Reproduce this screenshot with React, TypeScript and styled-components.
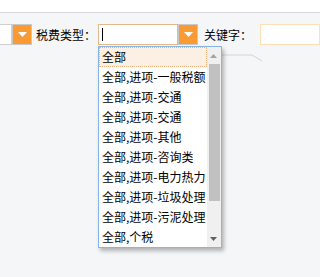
import React from "react";
import styled, { createGlobalStyle } from "styled-components";

const Global = createGlobalStyle`
  html, body { margin: 0; padding: 0; }
  body {
    background: #f5f6f8;
    font-family: "Noto Sans CJK SC", "Noto Sans", sans-serif;
    font-size: 12px;
    color: #000;
    overflow: hidden;
  }
`;

const Page = styled.div`
  position: relative;
  width: 100%;
  height: 277px;
  overflow: hidden;
`;

const Header = styled.div`
  height: 12px;
  background: #ffffff;
  border-bottom: 1px solid #d6d8dc;
`;

const Toolbar = styled.div`
  display: flex;
  align-items: center;
  padding-top: 11px;
  height: 21px;
  white-space: nowrap;
`;

const SelectWrap = styled.div<{ $offset?: number }>`
  position: relative;
  display: flex;
  height: 21px;
  margin-left: ${(p) => p.$offset ?? 0}px;
`;

const TextBox = styled.div<{ $w: number; $border: string }>`
  position: relative;
  box-sizing: border-box;
  width: ${(p) => p.$w}px;
  flex-shrink: 0;
  height: 21px;
  background: #fff;
  border: 1px solid ${(p) => p.$border};
`;

const Caret = styled.span`
  position: absolute;
  left: 3px;
  top: 3px;
  width: 1px;
  height: 13px;
  background: #000;
`;

const DropButton = styled.div`
  box-sizing: border-box;
  width: 20px;
  height: 21px;
  background: #f99a33;
  border: 1px solid #c8c8c8;
  display: flex;
  align-items: center;
  justify-content: center;
`;

const Label = styled.span<{ $ml: number; $mr: number }>`
  margin-left: ${(p) => p.$ml}px;
  margin-right: ${(p) => p.$mr}px;
  font-size: 12px;
  line-height: 21px;
`;

const List = styled.div`
  position: absolute;
  left: 0;
  top: 22px;
  box-sizing: border-box;
  width: 124px;
  height: 202px;
  background: #fff;
  border: 1px solid #86b5e8;
  box-shadow: 2px 3px 4px rgba(0, 0, 0, 0.28);
  display: flex;
  z-index: 2;
`;

const Items = styled.div`
  flex: 1;
  display: flex;
  flex-direction: column;
`;

const Item = styled.div<{ $active?: boolean }>`
  box-sizing: border-box;
  height: 20px;
  line-height: 18px;
  padding-left: 2px;
  font-size: 12px;
  white-space: nowrap;
  overflow: hidden;
  background: ${(p) => (p.$active ? "#fcf0e4" : "#fff")};
  border: 1px ${(p) => (p.$active ? "dotted #f0b27a" : "solid transparent")};
`;

const ScrollBar = styled.div`
  width: 16px;
  background: #f0f0f0;
  display: flex;
  flex-direction: column;
`;

const ArrowCell = styled.div`
  height: 17px;
  display: flex;
  align-items: center;
  justify-content: center;
`;

const Thumb = styled.div`
  height: 137px;
  margin: 0 1px 0 2px;
  background: #c1c1c1;
`;

const TrackRest = styled.div`
  flex: 1;
`;

const BehindShape = styled.svg`
  position: absolute;
  left: 214px;
  top: 52px;
  z-index: 1;
`;

const Tri = ({ dir, color, w, h }: { dir: "up" | "down"; color: string; w: number; h: number }) => (
  <svg width={w} height={h} viewBox={`0 0 ${w} ${h}`}>
    {dir === "down" ? (
      <polygon points={`0,0 ${w},0 ${w / 2},${h}`} fill={color} />
    ) : (
      <polygon points={`0,${h} ${w},${h} ${w / 2},0`} fill={color} />
    )}
  </svg>
);

const options = [
  "全部",
  "全部,进项-一般税额",
  "全部,进项-交通",
  "全部,进项-交通",
  "全部,进项-其他",
  "全部,进项-咨询类",
  "全部,进项-电力热力",
  "全部,进项-垃圾处理",
  "全部,进项-污泥处理",
  "全部,个税",
];

export default function App() {
  return (
    <Page>
      <Global />
      <Header />
      <Toolbar>
        <SelectWrap $offset={-40}>
          <TextBox $w={52} $border="#d0d0d0" />
          <DropButton>
            <Tri dir="down" color="#fff" w={9} h={5} />
          </DropButton>
        </SelectWrap>
        <Label $ml={4} $mr={2}>税费类型：</Label>
        <SelectWrap>
          <TextBox $w={80} $border="#e3b88c">
            <Caret />
          </TextBox>
          <DropButton>
            <Tri dir="down" color="#fff" w={9} h={5} />
          </DropButton>
          <List>
            <Items>
              {options.map((o, i) => (
                <Item key={i} $active={i === 0}>
                  {o}
                </Item>
              ))}
            </Items>
            <ScrollBar>
              <ArrowCell>
                <Tri dir="up" color="#a3a3a3" w={7} h={4} />
              </ArrowCell>
              <Thumb />
              <TrackRest />
              <ArrowCell>
                <Tri dir="down" color="#606060" w={7} h={4} />
              </ArrowCell>
            </ScrollBar>
          </List>
        </SelectWrap>
        <Label $ml={6} $mr={8}>关键字：</Label>
        <TextBox $w={60} $border="#fde0b5" />
      </Toolbar>
      <BehindShape width="50" height="12" viewBox="0 0 50 12">
        <polyline points="0,3 38,3 48,9" fill="none" stroke="#d3d3d3" strokeWidth="1" />
      </BehindShape>
    </Page>
  );
}
